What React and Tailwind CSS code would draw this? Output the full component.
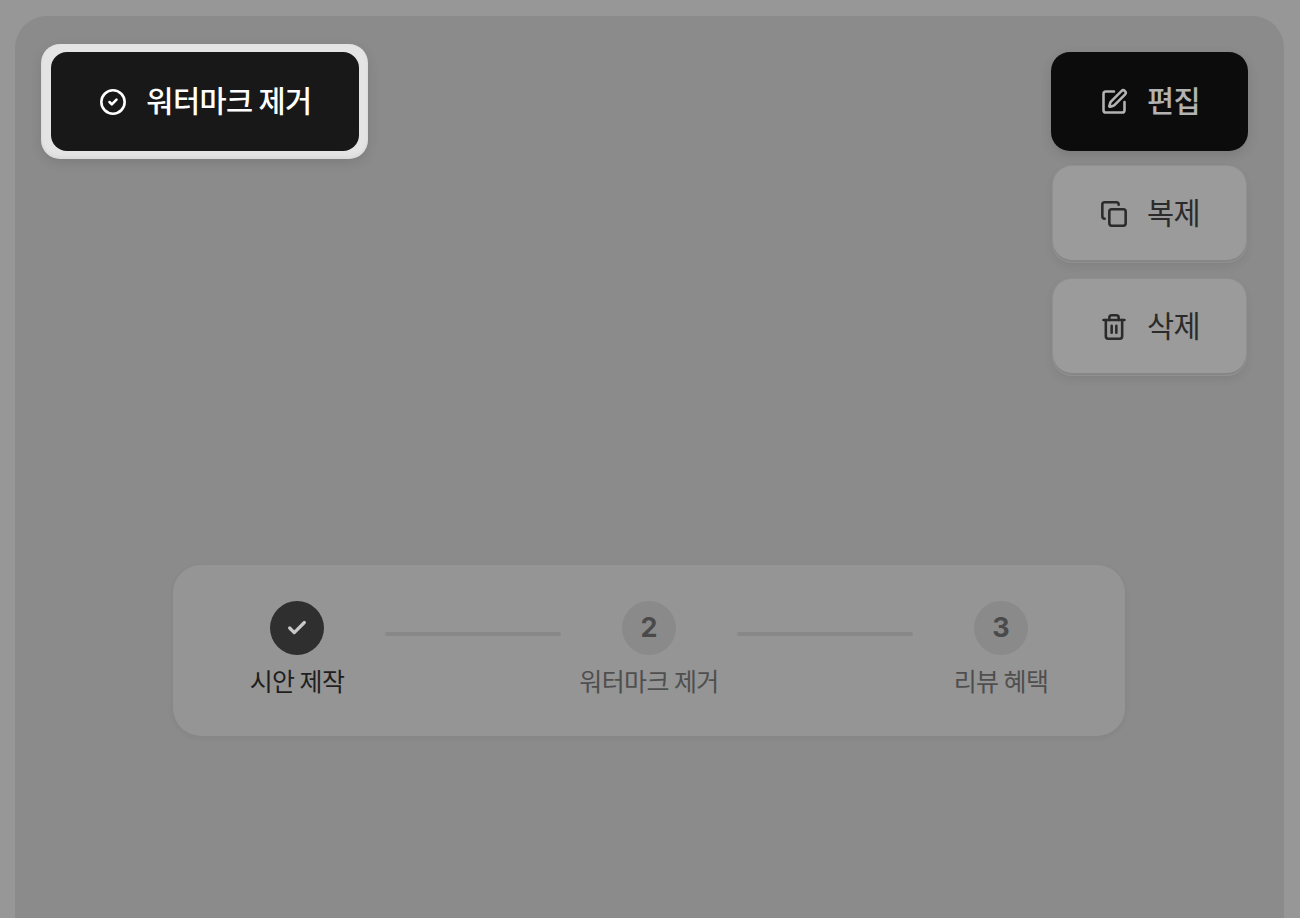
import React from 'react';
import { CircleCheck, SquarePen, Copy, Trash2, Check } from 'lucide-react';

const font = "font-['Noto_Sans_CJK_KR','Noto_Sans',sans-serif]";

function ActionButton({ icon: Icon, label, className }) {
  return (
    <button className={`flex items-center justify-center gap-[20px] rounded-[19px] text-[29.5px] leading-none tracking-[-0.6px] ${className}`}>
      <Icon className="w-[28px] h-[28px] translate-x-[1px]" strokeWidth={2.2} />
      <span className="-mt-[4px]">{label}</span>
    </button>
  );
}

function Step({ children, label, circle, text }) {
  return (
    <div className="w-[190px] flex flex-col items-center gap-[7px]">
      <div className={`w-[54px] h-[54px] rounded-full flex items-center justify-center ${circle}`}>
        {children}
      </div>
      <span className={`text-[25px] leading-[36px] font-normal tracking-[-0.6px] ${text}`}>{label}</span>
    </div>
  );
}

export default function App() {
  return (
    <div className={`h-[918px] overflow-hidden bg-[#979797] pt-4 pl-[15px] pr-[16px] ${font}`}>
      <div className="h-[1000px] rounded-t-[32px] bg-[#8b8b8b] pt-[28px] pl-[26px] pr-[36px]">
        <div className="flex justify-between items-start">
          <div className="rounded-[19px] bg-[#e4e4e4] pl-[10px] pr-[9px] py-2 shadow-[inset_0_-2px_4px_rgba(0,0,0,0.05),0_4px_12px_rgba(0,0,0,0.1)]">
            <ActionButton
              icon={CircleCheck}
              label="워터마크 제거"
              className="w-[308px] h-[99px] !rounded-[16px] bg-[#181818] text-white font-medium"
            />
          </div>

          <div className="w-[197px] pt-2 flex flex-col items-center">
            <ActionButton
              icon={SquarePen}
              label="편집"
              className="w-[197px] h-[99px] bg-[#0c0c0c] text-[#b3b3b3] font-medium shadow-[0_4px_12px_rgba(0,0,0,0.12)]"
            />
            <ActionButton
              icon={Copy}
              label="복제"
              className="w-[193px] h-[96px] mt-[15px] bg-[#9b9b9b] text-[#2b2b2b] shadow-[inset_0_-2px_0_#868686,0_0_0_1px_#909090,0_4px_10px_rgba(0,0,0,0.08)]"
            />
            <ActionButton
              icon={Trash2}
              label="삭제"
              className="w-[193px] h-[96px] mt-[17px] bg-[#9b9b9b] text-[#2b2b2b] shadow-[inset_0_-2px_0_#868686,0_0_0_1px_#909090,0_4px_10px_rgba(0,0,0,0.08)]"
            />
          </div>
        </div>

        <div className="w-[952px] h-[171px] ml-[132px] mt-[190px] rounded-[28px] bg-[#959595] pt-9 flex justify-center shadow-[0_2px_6px_rgba(0,0,0,0.05)]">
          <Step
            label="시안 제작"
            circle="bg-[#2f2f2f] text-[#c8c8c8]"
            text="text-[#1f1f1f]"
          >
            <Check className="w-[22px] h-[22px]" strokeWidth={3.5} />
          </Step>
          <div className="w-[176px] h-1 mt-[31px] -mx-[7px] rounded-full bg-[#888888]" />
          <Step
            label="워터마크 제거"
            circle="bg-[#8a8a8a] text-[#4a4a4a] font-['Inter',sans-serif] text-[27px] font-bold"
            text="text-[#4f4f4f]"
          >
            2
          </Step>
          <div className="w-[176px] h-1 mt-[31px] -mx-[7px] rounded-full bg-[#888888]" />
          <Step
            label="리뷰 혜택"
            circle="bg-[#8a8a8a] text-[#4a4a4a] font-['Inter',sans-serif] text-[27px] font-bold"
            text="text-[#4f4f4f]"
          >
            3
          </Step>
        </div>
      </div>
    </div>
  );
}
